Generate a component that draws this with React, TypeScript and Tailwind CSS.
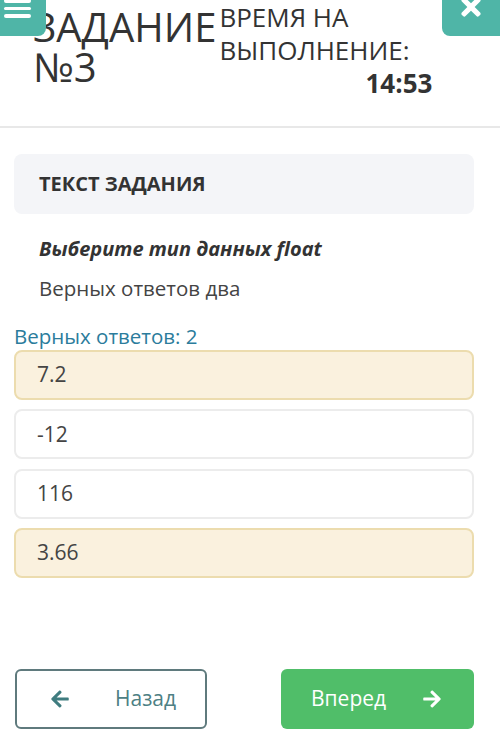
import { FaArrowLeft, FaArrowRight, FaTimes } from "react-icons/fa"

const options = [
    { value: "7.2", picked: true },
    { value: "-12", picked: false },
    { value: "116", picked: false },
    { value: "3.66", picked: true },
]

export default function App() {
    return (
        <div
            className="w-[500px] h-[732px] overflow-hidden bg-white text-[#333]"
            style={{ fontFamily: "'Open Sans', 'Liberation Sans', sans-serif" }}
        >
            {/* Header */}
            <div className="relative h-[128px] border-b-2 border-[#e8e8e8] flex">
                <div className="absolute left-0 top-0 w-[46px] h-[36px] bg-[#4fb5a7] rounded-br-lg overflow-hidden">
                    <div className="flex flex-col gap-[4px] pl-[4px] -mt-[1px]">
                        <div className="w-[27px] h-[3.5px] bg-white rounded-full" />
                        <div className="w-[27px] h-[3.5px] bg-white rounded-full" />
                        <div className="w-[27px] h-[3.5px] bg-white rounded-full" />
                    </div>
                </div>
                <div className="absolute right-0 top-0 w-[58px] h-[36px] bg-[#4fb5a7] rounded-bl-lg overflow-hidden flex justify-center">
                    <FaTimes className="text-white w-[22px] h-[28px] -mt-[7px]" />
                </div>

                <div className="pl-[33px] pt-[7px] text-[40px] leading-[40px] text-[#333]">
                    ЗАДАНИЕ
                    <br />
                    №3
                </div>
                <div className="ml-[3px] w-[213px] pt-[1px] text-[26px] leading-[33px] text-[#333] flex flex-col">
                    <span>ВРЕМЯ НА</span>
                    <span>ВЫПОЛНЕНИЕ:</span>
                    <span className="self-end font-bold">14:53</span>
                </div>
            </div>

            {/* Task */}
            <div className="px-[14px] pr-[26px] pt-[26px]">
                <div className="h-[60px] rounded-lg bg-[#f4f5f8] flex items-center pl-[25px]">
                    <span className="text-[20px] font-bold text-[#333]">ТЕКСТ ЗАДАНИЯ</span>
                </div>
                <div className="pl-[25px] pt-[18px]">
                    <p className="text-[20px] leading-[34px] font-bold italic text-[#333]">
                        Выберите тип данных float
                    </p>
                    <p className="text-[20.5px] leading-[34px] mt-[5px] text-[#444]">Верных ответов два</p>
                </div>
                <p className="mt-[20px] text-[20.5px] leading-[22px] text-[#2b7c9c]">Верных ответов: 2</p>

                <div className="mt-[3px] flex flex-col gap-[9.3px]">
                    {options.map((o) => (
                        <div
                            key={o.value}
                            className={
                                o.picked
                                    ? "h-[50px] rounded-lg border-2 border-[#ecdcae] bg-[#faf1de] flex items-center pl-[21px] text-[21px] text-[#444]"
                                    : "h-[50px] rounded-lg border-2 border-[#ececec] bg-white flex items-center pl-[21px] text-[21px] text-[#444]"
                            }
                        >
                            {o.value}
                        </div>
                    ))}
                </div>
            </div>

            {/* Navigation */}
            <div className="mt-[91px] pl-[15px] pr-[26px] flex justify-between">
                <button className="w-[192px] h-[60px] rounded-md border-2 border-[#5f7a7d] flex items-center pl-[33px] text-[#4d8084]">
                    <FaArrowLeft className="w-[20px] h-[20px] text-[#3f7c7f]" />
                    <span className="ml-[45px] text-[21px]">Назад</span>
                </button>
                <button className="w-[193px] h-[60px] rounded-md bg-[#50be69] flex items-center pl-[30px] text-white">
                    <span className="text-[21px]">Вперед</span>
                    <FaArrowRight className="ml-[36px] w-[20px] h-[20px]" />
                </button>
            </div>
        </div>
    )
}
